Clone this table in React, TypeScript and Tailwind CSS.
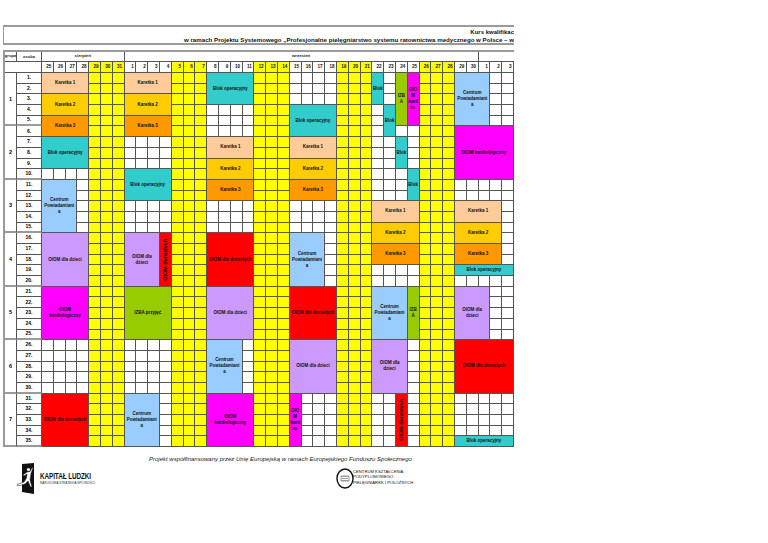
import React from "react";

type Block = {
  r1: number;
  r2: number;
  c1: number;
  c2: number;
  bg: string;
  lines: string[];
  v?: boolean;
};

const K1 = "bg-[#ffcc99]";
const K2 = "bg-[#ffcc00]";
const K3 = "bg-[#ff9900]";
const BL = "bg-[#33cccc]";
const CP = "bg-[#99ccff]";
const DZ = "bg-[#cc99ff]";
const DR = "bg-[#ff0000]";
const KA = "bg-[#ff00ff]";
const IZ = "bg-[#99cc00]";

const WEEKEND = new Set([4, 5, 6, 11, 12, 13, 18, 19, 20, 25, 26, 27, 32, 33, 34]);

const DAYS: number[] = [
  25, 26, 27, 28, 29, 30, 31,
  ...Array.from({ length: 30 }, (_, k) => k + 1),
  1, 2, 3,
];

const karetki = (r: number, c1: number, c2: number): Block[] => [
  { r1: r, r2: r + 1, c1, c2, bg: K1, lines: ["Karetka 1"] },
  { r1: r + 2, r2: r + 3, c1, c2, bg: K2, lines: ["Karetka 2"] },
  { r1: r + 4, r2: r + 5, c1, c2, bg: K3, lines: ["Karetka 3"] },
];

const CENTRUM = ["Centrum", "Powiadamiani", "a"];

const BLOCKS: Block[] = [
  ...karetki(1, 0, 3),
  ...karetki(1, 7, 10),
  { r1: 1, r2: 3, c1: 14, c2: 17, bg: BL, lines: ["Blok operacyjny"] },
  { r1: 4, r2: 6, c1: 21, c2: 24, bg: BL, lines: ["Blok operacyjny"] },
  { r1: 1, r2: 3, c1: 28, c2: 28, bg: BL, lines: ["Blok"] },
  { r1: 4, r2: 6, c1: 29, c2: 29, bg: BL, lines: ["Blok"] },
  { r1: 1, r2: 5, c1: 30, c2: 30, bg: IZ, lines: ["IZB", "A"] },
  { r1: 1, r2: 5, c1: 31, c2: 31, bg: KA, lines: ["OIO", "M", "kard", "io."] },
  { r1: 1, r2: 5, c1: 35, c2: 37, bg: CP, lines: CENTRUM },
  { r1: 6, r2: 10, c1: 35, c2: 39, bg: KA, lines: ["OIOM kardiologiczny"] },
  { r1: 7, r2: 9, c1: 0, c2: 3, bg: BL, lines: ["Blok operacyjny"] },
  { r1: 10, r2: 12, c1: 7, c2: 10, bg: BL, lines: ["Blok operacyjny"] },
  ...karetki(7, 14, 17),
  ...karetki(7, 21, 24),
  { r1: 7, r2: 9, c1: 30, c2: 30, bg: BL, lines: ["Blok"] },
  { r1: 10, r2: 12, c1: 31, c2: 31, bg: BL, lines: ["Blok"] },
  { r1: 11, r2: 15, c1: 0, c2: 2, bg: CP, lines: CENTRUM },
  ...karetki(13, 28, 31),
  ...karetki(13, 35, 38),
  { r1: 19, r2: 19, c1: 35, c2: 39, bg: BL, lines: ["Blok operacyjny"] },
  { r1: 16, r2: 20, c1: 0, c2: 3, bg: DZ, lines: ["OIOM dla dzieci"] },
  { r1: 16, r2: 20, c1: 7, c2: 9, bg: DZ, lines: ["OIOM dla", "dzieci"] },
  { r1: 16, r2: 20, c1: 10, c2: 10, bg: DR, lines: ["OIOM dorosłych"], v: true },
  { r1: 16, r2: 20, c1: 14, c2: 17, bg: DR, lines: ["OIOM dla dorosłych"] },
  { r1: 16, r2: 20, c1: 21, c2: 23, bg: CP, lines: CENTRUM },
  { r1: 21, r2: 25, c1: 0, c2: 3, bg: KA, lines: ["OIOM", "kardiologiczny"] },
  { r1: 21, r2: 25, c1: 7, c2: 10, bg: IZ, lines: ["IZBA przyjęć"] },
  { r1: 21, r2: 25, c1: 14, c2: 17, bg: DZ, lines: ["OIOM dla dzieci"] },
  { r1: 21, r2: 25, c1: 21, c2: 24, bg: DR, lines: ["OIOM dla dorosłych"] },
  { r1: 21, r2: 25, c1: 28, c2: 30, bg: CP, lines: CENTRUM },
  { r1: 21, r2: 25, c1: 31, c2: 31, bg: IZ, lines: ["IZB", "A"] },
  { r1: 21, r2: 25, c1: 35, c2: 37, bg: DZ, lines: ["OIOM dla", "dzieci"] },
  { r1: 26, r2: 30, c1: 14, c2: 16, bg: CP, lines: CENTRUM },
  { r1: 26, r2: 30, c1: 21, c2: 24, bg: DZ, lines: ["OIOM dla dzieci"] },
  { r1: 26, r2: 30, c1: 28, c2: 30, bg: DZ, lines: ["OIOM dla", "dzieci"] },
  { r1: 26, r2: 30, c1: 35, c2: 39, bg: DR, lines: ["OIOM dla dorosłych"] },
  { r1: 31, r2: 35, c1: 0, c2: 3, bg: DR, lines: ["OIOM dla dorosłych"] },
  { r1: 31, r2: 35, c1: 7, c2: 9, bg: CP, lines: CENTRUM },
  { r1: 31, r2: 35, c1: 14, c2: 17, bg: KA, lines: ["OIOM", "kardiologiczny"] },
  { r1: 31, r2: 35, c1: 21, c2: 21, bg: KA, lines: ["OIO", "M", "kard", "io."] },
  { r1: 31, r2: 35, c1: 30, c2: 30, bg: DR, lines: ["OIOM dorosłych"], v: true },
  { r1: 35, r2: 35, c1: 35, c2: 39, bg: BL, lines: ["Blok operacyjny"] },
];

function KapitalFlag() {
  return (
    <svg width="19" height="31" viewBox="0 0 19 31">
      <polygon points="6,1 18,0 18,31 6,29" fill="#111" />
      <circle cx="12.5" cy="6.5" r="1.6" fill="#fff" />
      <polygon points="11,9 14,8.5 16.5,4 17,5 15,10.5 14,17 16,24 14.5,24 12,18 9,21 1.5,23 1,21.5 8,19 10.5,15 11,11 8,13 7,12" fill="#fff" stroke="#111" strokeWidth="0.5" />
    </svg>
  );
}

function CkppLogo() {
  return (
    <svg width="19" height="21" viewBox="0 0 19 21">
      <ellipse cx="9" cy="10.5" rx="8" ry="9.5" fill="#fff" stroke="#111" strokeWidth="1.4" />
      <rect x="4.5" y="7.5" width="9" height="6" rx="1.2" fill="#9a9a9a" />
      <rect x="5.5" y="9" width="7" height="3" fill="#fff" />
      <line x1="6" y1="10.5" x2="12" y2="10.5" stroke="#555" strokeWidth="0.6" />
    </svg>
  );
}

export default function App() {
  const cells: React.ReactNode[] = [];

  for (let r = 1; r <= 35; r++) {
    for (let i = 0; i < 40; i++) {
      cells.push(
        <div
          key={`c-${r}-${i}`}
          className={`${WEEKEND.has(i) ? "bg-[#ffff00]" : "bg-white"} border-r border-b border-[#555]`}
          style={{ gridRow: r + 2, gridColumn: i + 3 }}
        />
      );
    }
  }

  return (
    <div className="w-[768px] h-[543px] bg-white overflow-hidden pt-[25px] pl-[3px] text-black font-['Liberation_Sans',Arial,sans-serif]">
      <div className="w-[511px] overflow-hidden">
        <div className="h-[20px] border-t-2 border-b-2 border-l border-[#9a9a9a] pt-[1.5px] text-right font-bold whitespace-nowrap text-[#111]">
          <div className="text-[6px] leading-[7.5px]">Kurs kwalifikac</div>
          <div className="text-[6.15px] leading-[7.5px]">
            w ramach Projektu Systemowego „Profesjonalne pielęgniarstwo systemu ratownictwa medycznego w Polsce – w
          </div>
        </div>

        <div className="mt-[5px] border-t-2 border-l-2 border-[#9a9a9a]">
          <div className="grid w-[509px] grid-cols-[12px_25px_repeat(40,minmax(0,1fr))] grid-rows-[10px_11px_repeat(35,10.7px)]">
            <div
              className="border-r border-b border-[#555] flex items-center justify-center text-[4.2px] font-bold text-[#222]"
              style={{ gridRow: 1, gridColumn: 1 }}
            >
              grupa
            </div>
            <div
              className="border-r border-b border-[#555] flex items-center justify-center text-[4px] font-bold text-[#222]"
              style={{ gridRow: 1, gridColumn: 2 }}
            >
              osoba
            </div>
            <div
              className="border-r border-b border-[#555] flex items-center justify-center text-[4.3px] font-bold text-[#222]"
              style={{ gridRow: 1, gridColumn: "3 / 10" }}
            >
              sierpień
            </div>
            <div
              className="border-r border-b border-[#555] flex items-center justify-center text-[4.3px] font-bold text-[#222]"
              style={{ gridRow: 1, gridColumn: "10 / 40" }}
            >
              wrzesień
            </div>
            <div className="border-b border-[#555]" style={{ gridRow: 1, gridColumn: "40 / 43" }} />

            <div className="border-r border-b border-[#555]" style={{ gridRow: 2, gridColumn: "1 / 3" }} />
            {DAYS.map((d, i) => (
              <div
                key={`d-${i}`}
                className={`${WEEKEND.has(i) ? "bg-[#ffff00]" : "bg-white"} border-r border-b border-[#555] flex items-center justify-end pr-[1.5px] text-[4.6px] font-bold text-[#111]`}
                style={{ gridRow: 2, gridColumn: i + 3 }}
              >
                {d}
              </div>
            ))}

            {Array.from({ length: 7 }, (_, g) => (
              <div
                key={`g-${g}`}
                className="border-r border-r-[#555] border-b-2 border-b-[#9a9a9a] flex items-center justify-center text-[5.5px] font-bold"
                style={{ gridRow: `${3 + g * 5} / span 5`, gridColumn: 1 }}
              >
                {g + 1}
              </div>
            ))}

            {Array.from({ length: 35 }, (_, k) => (
              <div
                key={`o-${k}`}
                className={`${(k + 1) % 5 === 0 ? "border-b-2 border-b-[#9a9a9a]" : "border-b border-b-[#555]"} border-r border-r-[#555] flex items-center justify-center text-[5px] font-bold`}
                style={{ gridRow: k + 3, gridColumn: 2 }}
              >
                {k + 1}.
              </div>
            ))}

            {cells}

            {BLOCKS.map((b, n) => (
              <div
                key={`b-${n}`}
                className={`${b.bg} border-r border-b border-[#555] flex flex-col items-center justify-center text-center overflow-hidden font-bold text-[4.5px] leading-[6px] text-[#111]`}
                style={{ gridRow: `${b.r1 + 2} / ${b.r2 + 3}`, gridColumn: `${b.c1 + 3} / ${b.c2 + 4}` }}
              >
                {b.v ? (
                  <span className="[writing-mode:vertical-rl] rotate-180 whitespace-nowrap text-[5.4px] leading-[6px]">
                    {b.lines[0]}
                  </span>
                ) : (
                  b.lines.map((l, j) => (
                    <div key={j} className="whitespace-nowrap">
                      {l}
                    </div>
                  ))
                )}
              </div>
            ))}
          </div>
        </div>
      </div>

      <div className="mt-[8px] pl-[146px] text-[6px] leading-[8px] italic text-[#222] whitespace-nowrap">
        Projekt współfinansowany przez Unię Europejską w ramach Europejskiego Funduszu Społecznego
      </div>

      <div className="flex items-start">
        <div className="ml-[13px] w-[100px] flex items-start gap-[5px]">
          <KapitalFlag />
          <div className="mt-[9px] flex flex-col">
            <div className="text-[6.4px] leading-[8px] font-bold tracking-[-0.1px] text-[#111] scale-y-[1.3] origin-left whitespace-nowrap">
              KAPITAŁ LUDZKI
            </div>
            <div className="mt-[1px] text-[3.1px] leading-[4px] text-[#333] whitespace-nowrap">
              NARODOWA STRATEGIA SPÓJNOŚCI
            </div>
          </div>
        </div>
        <div className="ml-[220px] mt-[5px] flex items-start">
          <CkppLogo />
          <div className="-ml-[2px] mt-[0.5px] flex flex-col text-[4.2px] leading-[5.5px] text-[#111] whitespace-nowrap">
            <div>CENTRUM KSZTAŁCENIA</div>
            <div>PODYPLOMOWEGO</div>
            <div>PIELĘGNIAREK I POŁOŻNYCH</div>
          </div>
        </div>
      </div>
    </div>
  );
}
